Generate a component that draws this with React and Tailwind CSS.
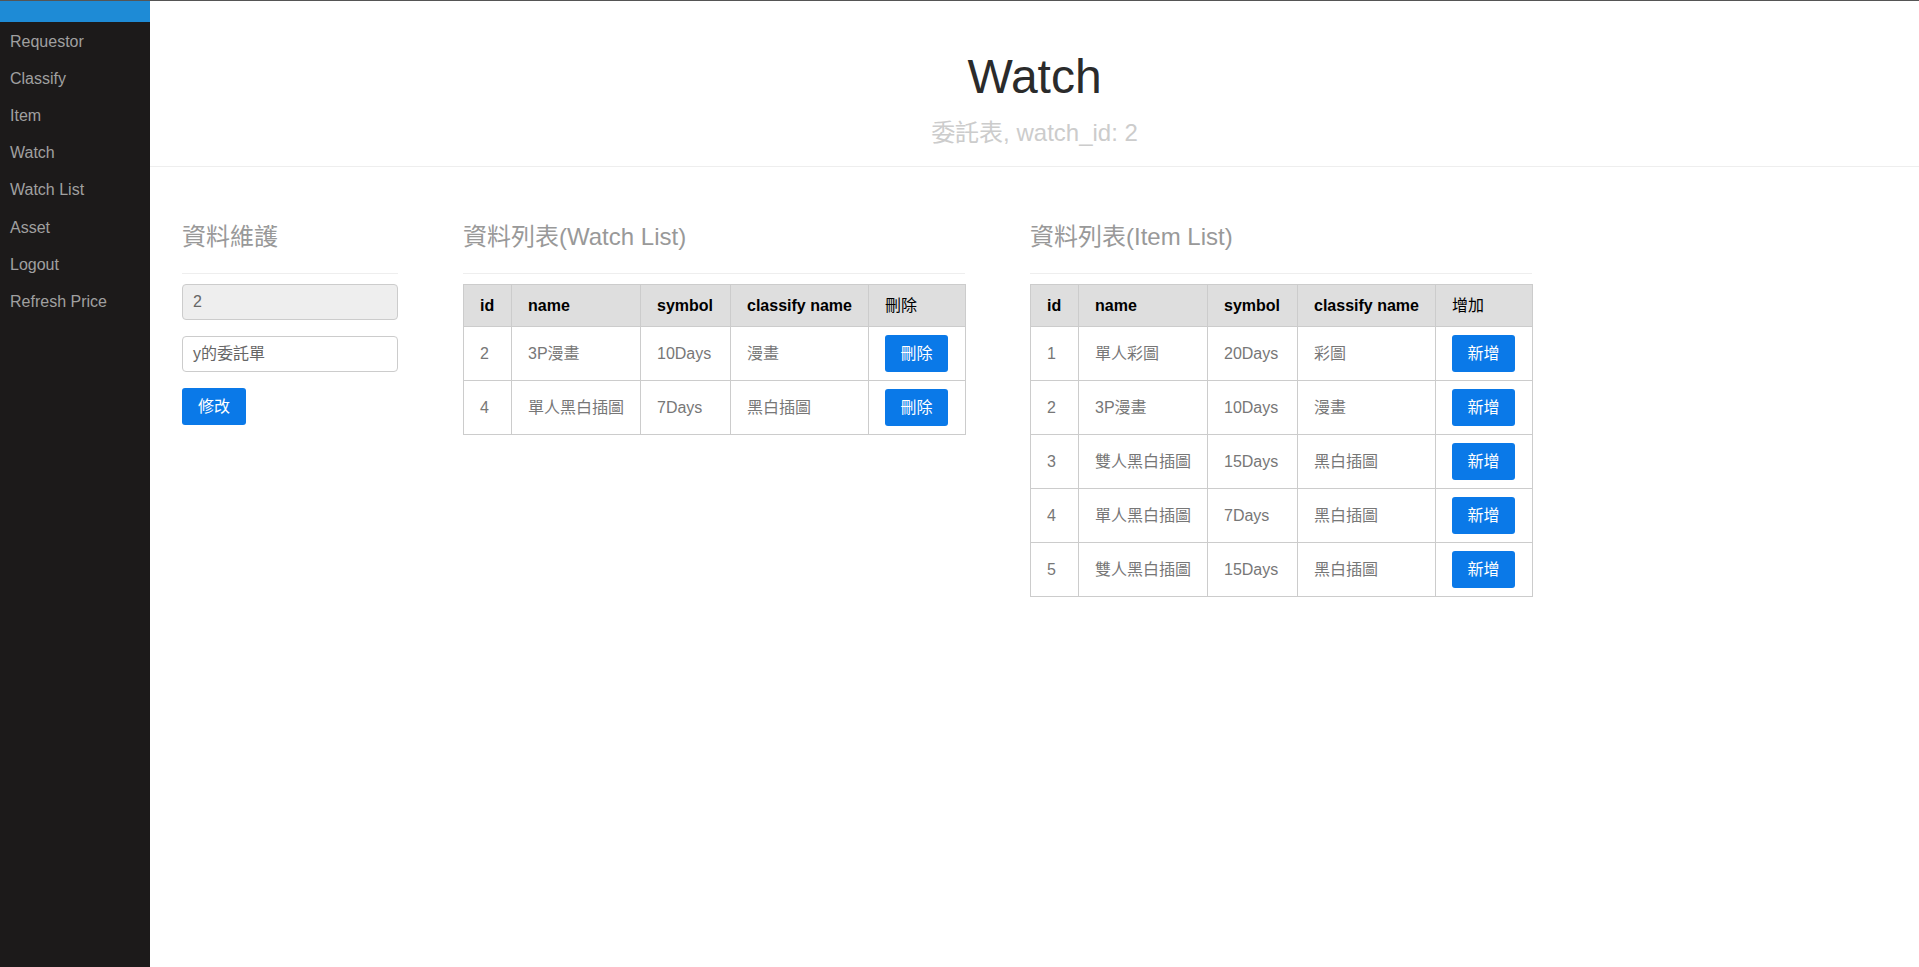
import React from "react";

const font = { fontFamily: '"Liberation Sans", Arial, "Noto Sans CJK TC", sans-serif' };

const navItems = ["Requestor", "Classify", "Item", "Watch", "Watch List", "Asset", "Logout", "Refresh Price"];

const watchRows = [
  ["2", "3P漫畫", "10Days", "漫畫"],
  ["4", "單人黑白插圖", "7Days", "黑白插圖"],
];

const itemRows = [
  ["1", "單人彩圖", "20Days", "彩圖"],
  ["2", "3P漫畫", "10Days", "漫畫"],
  ["3", "雙人黑白插圖", "15Days", "黑白插圖"],
  ["4", "單人黑白插圖", "7Days", "黑白插圖"],
  ["5", "雙人黑白插圖", "15Days", "黑白插圖"],
];

const colWidths = [48, 129, 90, 138, 97];

function DataTable({ action, actionLabel, rows }) {
  return (
    <table className="w-[502px] table-fixed border-collapse text-[16px]">
      <colgroup>
        <col className="w-[48px]" />
        <col className="w-[129px]" />
        <col className="w-[90px]" />
        <col className="w-[138px]" />
        <col className="w-[97px]" />
      </colgroup>
      <thead>
        <tr className="h-[42px] bg-[#dedede]">
          {["id", "name", "symbol", "classify name"].map((h) => (
            <th key={h} className="border border-[#cccccc] px-4 text-left font-bold text-black whitespace-nowrap">
              {h}
            </th>
          ))}
          <th className="border border-[#cccccc] px-4 text-left font-normal text-black">{action}</th>
        </tr>
      </thead>
      <tbody>
        {rows.map((r, i) => (
          <tr key={i} className="h-[54px]">
            {r.map((c, j) => (
              <td key={j} className="border border-[#cccccc] px-4 text-[#777777] whitespace-nowrap">
                {c}
              </td>
            ))}
            <td className="border border-[#cccccc] px-4">
              <button className="h-[37px] w-[63px] rounded-[3px] bg-[#0a79e8] text-[16px] text-white">
                {actionLabel}
              </button>
            </td>
          </tr>
        ))}
      </tbody>
    </table>
  );
}

function SectionHeading({ children }) {
  return (
    <>
      <h2 className="text-[24px] leading-[32px] text-[#999999]">{children}</h2>
      <div className="mt-[20px] h-px bg-[#eeeeee]" />
    </>
  );
}

export default function App() {
  return (
    <div className="flex min-h-[967px] border-t border-[#555555] bg-white" style={font}>
      <aside className="w-[150px] shrink-0 bg-[#1c1a1a]">
        <div className="h-[21px] bg-[#1e8bd6]" />
        <nav className="pt-[1px]">
          {navItems.map((n) => (
            <div key={n} className="flex h-[37.2px] items-center px-[10px] text-[16px] text-[#a0a0a0]">
              {n}
            </div>
          ))}
        </nav>
      </aside>
      <main className="flex-1">
        <header className="flex h-[166px] flex-col items-center border-b border-[#eeeeee] pt-[52px]">
          <h1 className="text-[48px] leading-[48px] text-[#2b2b2b]">Watch</h1>
          <p className="mt-[17px] text-[24px] leading-[30px] text-[#cccccc]">委託表, watch_id: 2</p>
        </header>
        <div className="flex pl-[32px] pt-[54px]">
          <section className="w-[216px]">
            <SectionHeading>資料維護</SectionHeading>
            <div className="mt-[10px] flex h-[36px] items-center rounded-[4px] border border-[#cccccc] bg-[#eeeeee] px-[10px] text-[16px] text-[#666666]">
              2
            </div>
            <div className="mt-[16px] flex h-[36px] items-center rounded-[4px] border border-[#cccccc] bg-white px-[10px] text-[16px] text-[#666666]">
              y的委託單
            </div>
            <button className="mt-[16px] h-[37px] w-[64px] rounded-[3px] bg-[#0a79e8] text-[16px] text-white">
              修改
            </button>
          </section>
          <section className="ml-[65px] w-[502px]">
            <SectionHeading>資料列表(Watch List)</SectionHeading>
            <div className="mt-[10px]">
              <DataTable action="刪除" actionLabel="刪除" rows={watchRows} />
            </div>
          </section>
          <section className="ml-[65px] w-[502px]">
            <SectionHeading>資料列表(Item List)</SectionHeading>
            <div className="mt-[10px]">
              <DataTable action="增加" actionLabel="新增" rows={itemRows} />
            </div>
          </section>
        </div>
      </main>
    </div>
  );
}
